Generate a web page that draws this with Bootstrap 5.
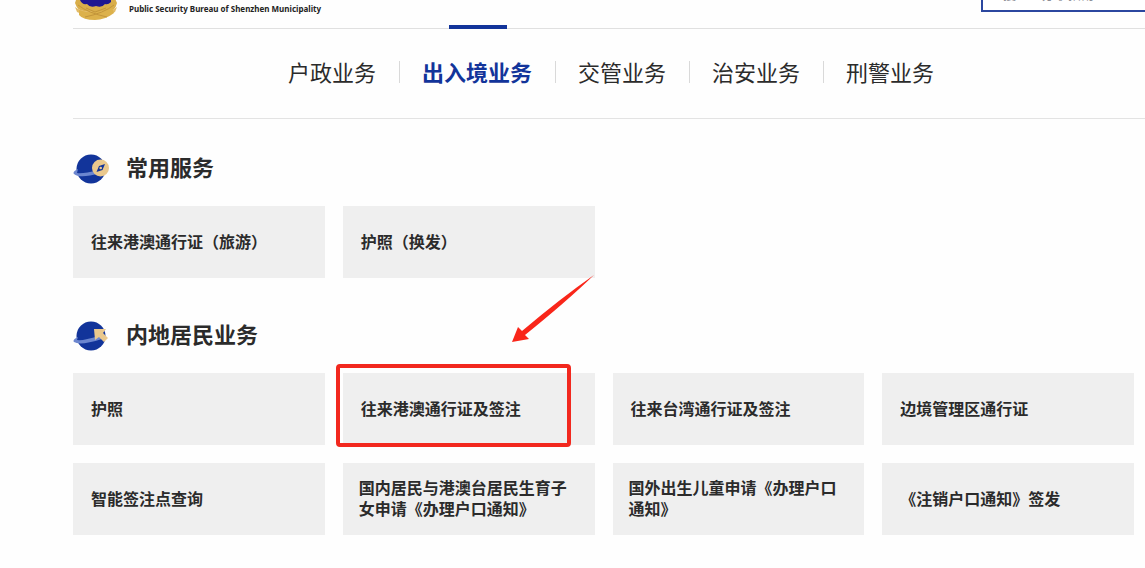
<!DOCTYPE html>
<html lang="zh-CN">
<head>
<meta charset="utf-8">
<meta name="viewport" content="width=device-width, initial-scale=1">
<title>出入境业务</title>
<link href="https://cdn.jsdelivr.net/npm/bootstrap@5.3.0/dist/css/bootstrap.min.css" rel="stylesheet">
<style>
  body { font-family: "Noto Sans", "Noto Sans CJK SC", sans-serif; color: #2b2b2b; background: #fefefe; overflow-x: hidden; }
  a { color: inherit; text-decoration: none; }
  .page { padding-left: 73px; }
  .site-head { height: 29px; border-bottom: 1px solid #e0e0e0; }
  .head-clip { height: 29px; overflow: hidden; }
  .brand-name { font-size: 8px; line-height: 12px; font-weight: 700; margin: 0 0 14px 10px; color: #222; }
  .emblem { width: 46px; margin-bottom: 9px; }
  .tab-mark { width: 58px; height: 4px; background: #12349a; left: 35.1%; bottom: -1px; }
  .search-box { width: 180px; height: 36px; margin: 0 -16px 17px 0; border: 2px solid #2b479f; border-radius: 0; font-size: 13px; padding: 0 20px; background: #fff; }
  .search-box::placeholder { color: #8d8d95; }
  .biz-nav { height: 90px; border-bottom: 1px solid #e3e3e3; padding: 0 0 4px 193px; }
  .biz-nav li + li { border-left: 1px solid #d9d9d9; }
  .biz-nav li { padding: 0 23px 0 22px; line-height: 22px; font-size: 22px; }
  .biz-nav .current { color: #12349a; font-weight: 700; }
  .services { padding: 0 11px 34px 0; }
  .sec-title { font-size: 22px; line-height: 32px; font-weight: 700; margin: 0 0 3px 15px; }
  .sec-head { height: 32px; margin-bottom: 22px; }
  .tiles { --bs-gutter-x: 18px; --bs-gutter-y: 18px; }
  .tile { height: 72px; background: #efefef; font-size: 16px; line-height: 21px; font-weight: 700; padding: 0 16px 0 18px; }
  .tile.two-line { padding: 0 16px; }
  .sec-a { padding-top: 33px; }
  .sec-b { padding-top: 41px; }
  .marker { border: 4px solid #f2281e; border-radius: 4px; left: 2px; right: 33px; top: -9px; bottom: -2px; pointer-events: none; }
  .pointer { width: 84px; height: 69px; right: 9px; top: -99px; pointer-events: none; }
</style>
</head>
<body>
<div class="page">
  <header class="site-head position-relative">
    <div class="head-clip d-flex align-items-end">
      <svg class="emblem flex-shrink-0" height="46" viewBox="0 0 46 46" aria-hidden="true">
        <path d="M2 29Q5 38 12 37Q23 43 34 37Q42 38 44 29L40 20H5Z" fill="#d9ae4a"/>
        <path d="M7 5H38V28Q35 31 32 30Q29 34 23 32Q17 34 14 30Q9 31 7 26Z" fill="#1e1691"/>
        <path d="M2 33Q8 38 20 37Q10 42 4 38ZM44 33Q38 38 26 37Q36 42 42 38Z" fill="#e3bc68"/>
        <path d="M6 36Q22 42 39 34L41 39Q32 46 22 46Q10 46 6 41Z" fill="#dcb14b"/>
        <path d="M5 31Q15 39 34 43M41 31Q31 39 12 43M13 34L22 38L33 34" fill="none" stroke="#c3953a" stroke-width="1"/>
      </svg>
      <div class="brand-name text-nowrap">Public Security Bureau of Shenzhen Municipality</div>
      <input class="search-box ms-auto flex-shrink-0" type="search" aria-label="搜索" placeholder="搜　　办事指南">
    </div>
    <span class="tab-mark position-absolute"></span>
  </header>

  <nav class="biz-nav d-flex align-items-center" aria-label="业务分类">
    <ul class="list-unstyled d-flex mb-0 text-nowrap">
      <li><a href="#">户政业务</a></li>
      <li><a class="current" href="#" aria-current="page">出入境业务</a></li>
      <li><a href="#">交管业务</a></li>
      <li><a href="#">治安业务</a></li>
      <li><a href="#">刑警业务</a></li>
    </ul>
  </nav>

  <main class="services">
    <section class="sec-a">
      <div class="sec-head d-flex align-items-center">
        <svg width="38" height="32" viewBox="0 0 38 32" aria-hidden="true">
          <circle cx="18" cy="17" r="14.500" fill="#12349a"/>
          <path d="M5 17Q-1 20 1 22Q7 27 27 21L25 18Q10 22 4 21Z" fill="#6c86cf"/>
          <circle cx="27.500" cy="16" r="8.500" fill="#eac88d"/>
          <path d="M32 12L29.500 18L23.500 20L26 14Z" fill="#12349a"/><circle cx="27.700" cy="16" r="1.300" fill="#eac88d"/>
        </svg>
        <h2 class="sec-title">常用服务</h2>
      </div>
      <div class="row tiles">
        <div class="col-3"><a class="tile d-flex align-items-center" href="#">往来港澳通行证（旅游）</a></div>
        <div class="col-3"><a class="tile d-flex align-items-center" href="#">护照（换发）</a></div>
      </div>
    </section>

    <section class="sec-b">
      <div class="sec-head d-flex align-items-center">
        <svg width="38" height="32" viewBox="0 0 38 32" aria-hidden="true">
          <circle cx="18" cy="17" r="14.500" fill="#12349a"/>
          <path d="M5 18Q-1 21 1 23Q7 27 29 20L26 17Q10 22 4 21Z" fill="#6c86cf"/>
          <path d="M21 10H33L30 14L35 19L31 23L26 18L22 21Z" fill="#eac88d"/>
        </svg>
        <h2 class="sec-title">内地居民业务</h2>
      </div>
      <div class="row tiles">
        <div class="col-3"><a class="tile d-flex align-items-center" href="#">护照</a></div>
        <div class="col-3 position-relative">
          <a class="tile d-flex align-items-center" href="#">往来港澳通行证及签注</a>
          <span class="marker position-absolute mt-0"></span>
          <svg class="pointer position-absolute" viewBox="0 0 84 69" aria-hidden="true">
            <path d="M83 1Q50 24 11 57L7 53L1 68L18 65L14 61Q55 28 83 1Z" fill="#f9261a"/>
          </svg>
        </div>
        <div class="col-3"><a class="tile d-flex align-items-center" href="#">往来台湾通行证及签注</a></div>
        <div class="col-3"><a class="tile d-flex align-items-center" href="#">边境管理区通行证</a></div>
        <div class="col-3"><a class="tile d-flex align-items-center" href="#">智能签注点查询</a></div>
        <div class="col-3"><a class="tile two-line d-flex align-items-center" href="#">国内居民与港澳台居民生育子女申请《办理户口通知》</a></div>
        <div class="col-3"><a class="tile two-line d-flex align-items-center" href="#">国外出生儿童申请《办理户口通知》</a></div>
        <div class="col-3"><a class="tile d-flex align-items-center" href="#">《注销户口通知》签发</a></div>
      </div>
    </section>
  </main>
</div>
<script src="https://cdn.jsdelivr.net/npm/bootstrap@5.3.0/dist/js/bootstrap.bundle.min.js"></script>
</body>
</html>
